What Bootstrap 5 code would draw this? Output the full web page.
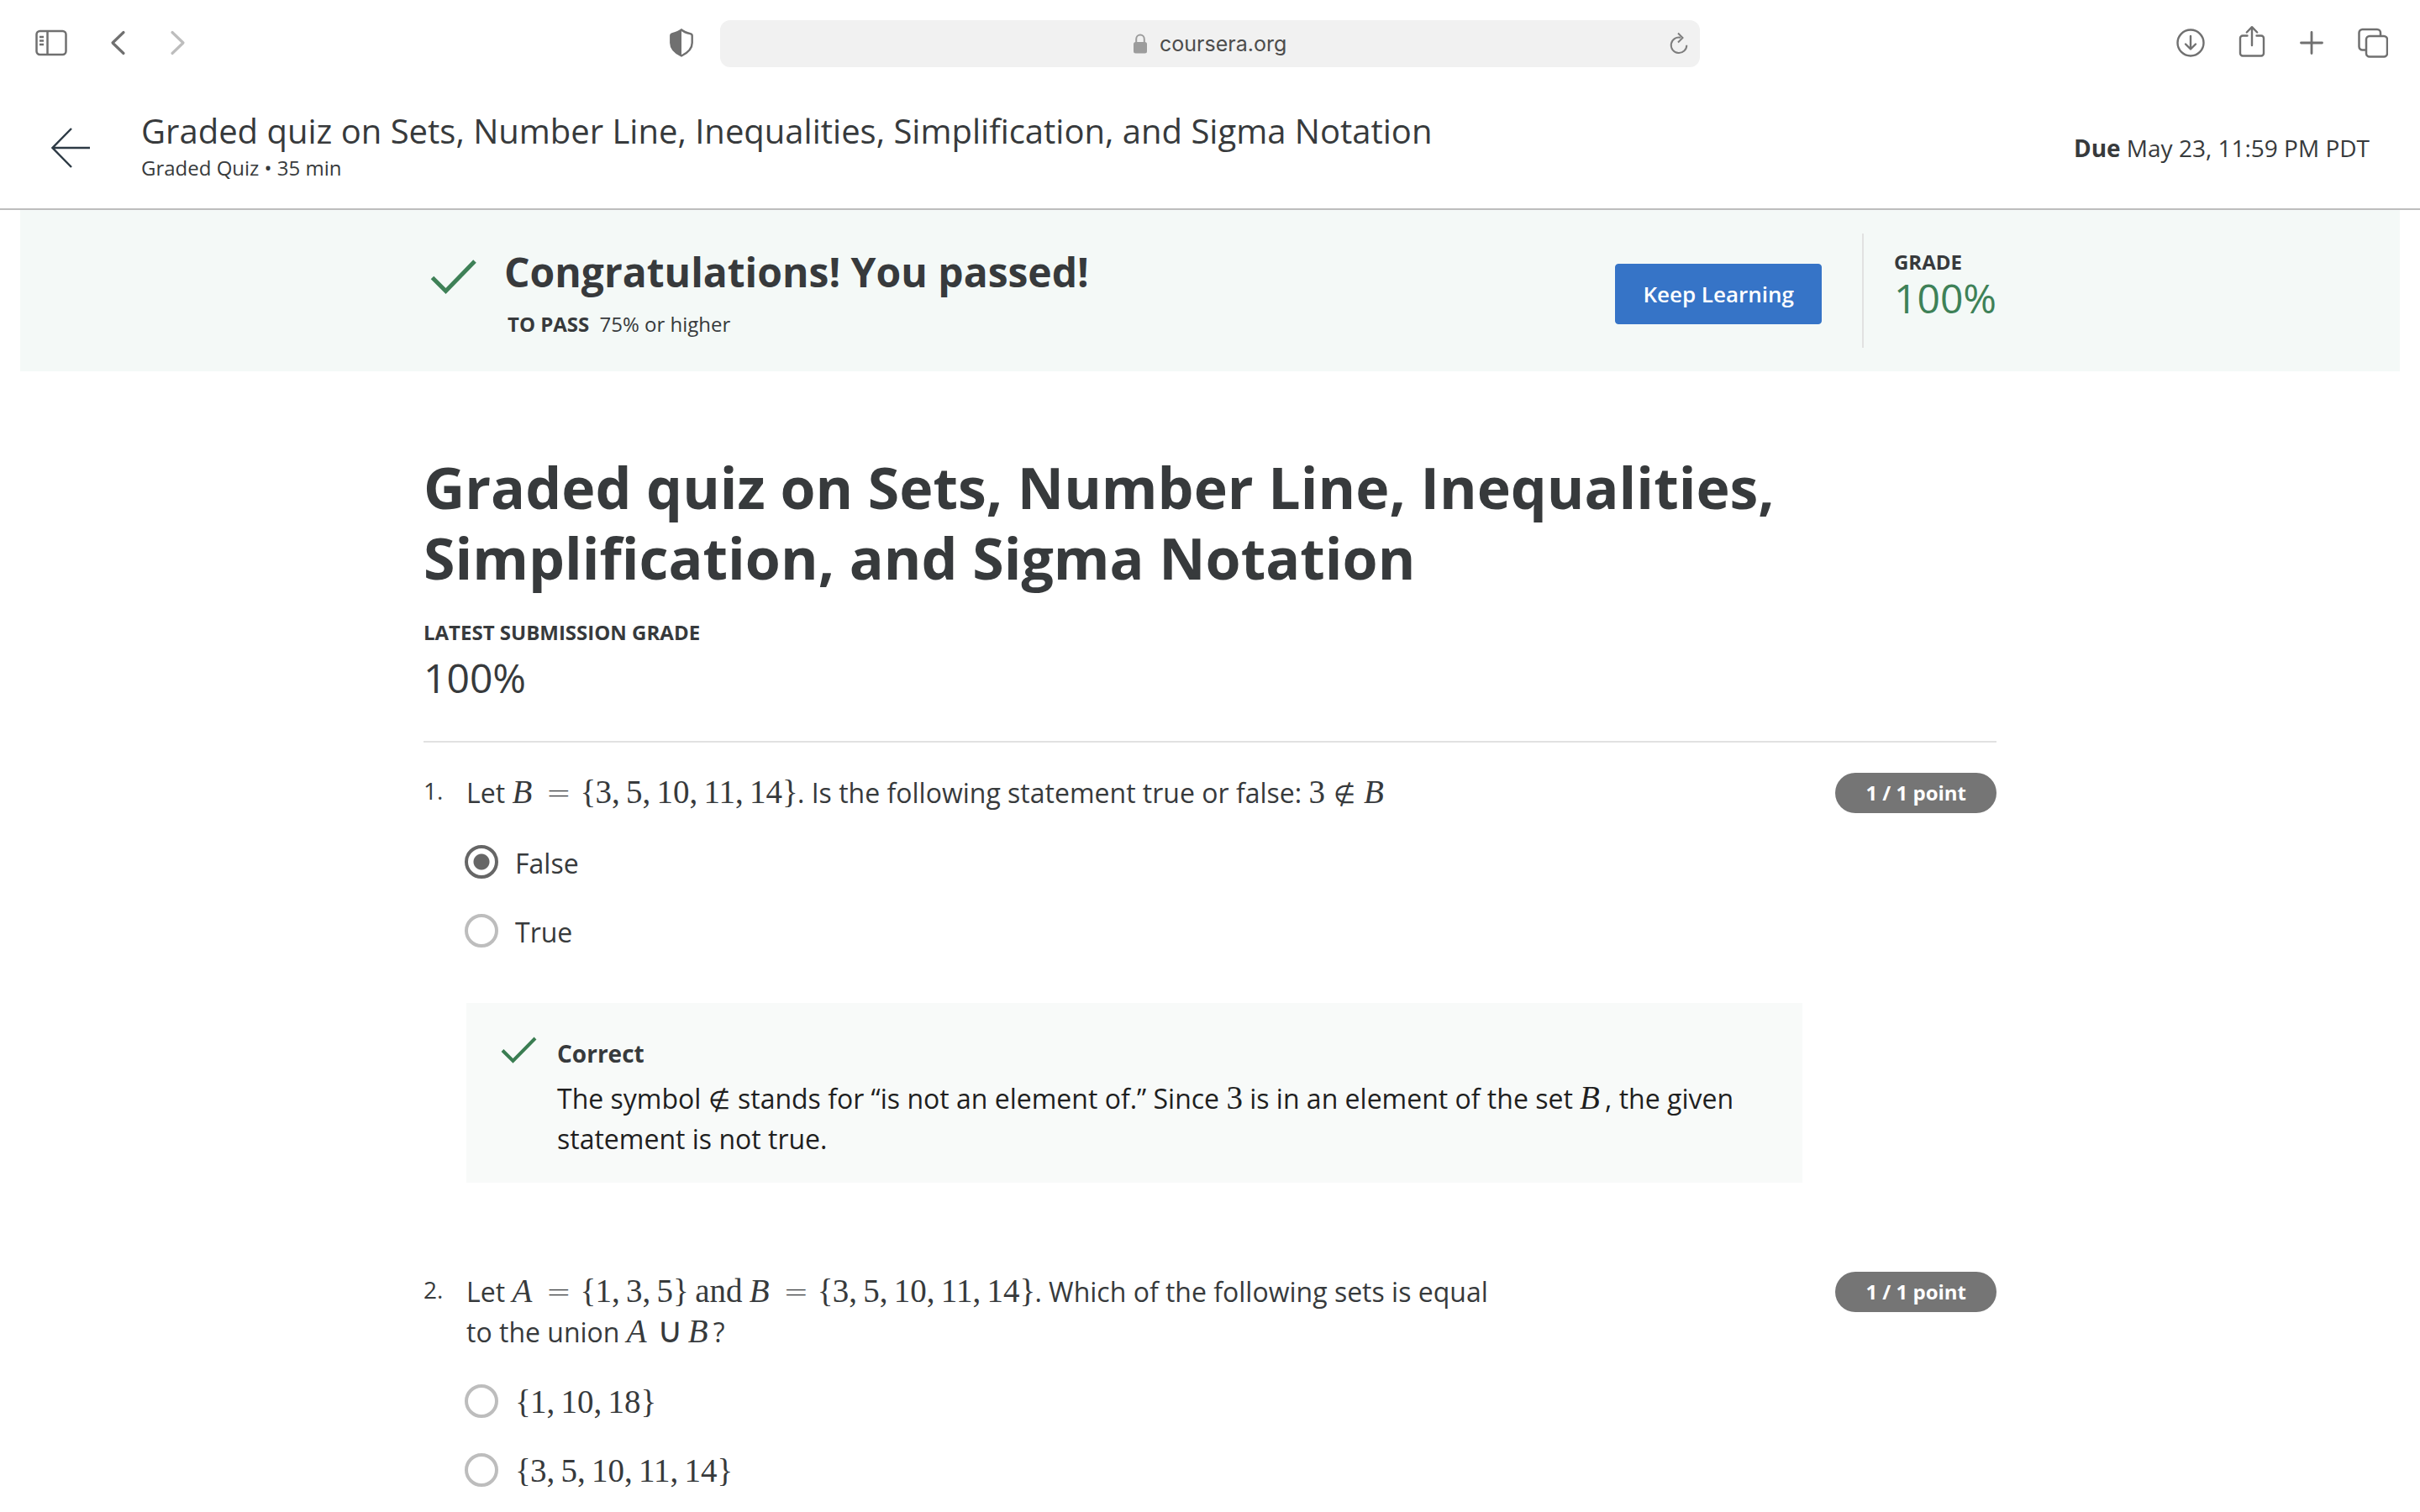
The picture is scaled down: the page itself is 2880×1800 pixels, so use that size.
<!DOCTYPE html>
<html lang="en">
<head>
<meta charset="utf-8">
<meta name="viewport" content="width=device-width, initial-scale=1">
<title>Graded quiz | Coursera</title>
<link rel="stylesheet" href="https://cdn.jsdelivr.net/npm/bootstrap@5.3.0/dist/css/bootstrap.min.css">
<style>
  :root { --ink: #373a3c; --pass: #3e8157; --rule: #e1e1e1; }
  body { font-family: "Open Sans", sans-serif; font-size: 32px; line-height: 48px; color: var(--ink); background: #fff; }
  svg { display: block; flex: none; }

  /* Browser toolbar */
  .toolbar { height: 104px; padding: 0 38px 2px; }
  .toolbar-side { flex: 1 1 0; }
  .icon-btn { padding: 0; border: 0; background: none; color: #707070; line-height: 1; }
  .nav-arrow { margin-left: 51px; }
  .nav-arrow:disabled { color: #bdbdbd; }
  .shield { margin-right: 32px; }
  .icon-gap { gap: 40px; }
  .share { margin-bottom: 4px; }
  .address { flex: 0 0 auto; width: 1166px; max-width: 60%; height: 56px; margin-top: 2px; padding: 0 14px; border-radius: 12px; background: #f1f1f1; }
  .address-text { width: 176px; height: 40px; padding: 0 0 0 6px; border: 0; background: none; color: #4c4c4c; font-family: Inter, sans-serif; font-size: 25px; line-height: 40px; }
  .lock { margin-left: 40px; }

  /* Item header */
  .item-header { height: 146px; padding: 0 60px; border-bottom: 2px solid #bdbdbd; }
  .item-heading { margin-left: 60px; padding-bottom: 8px; }
  .item-title { font-size: 40px; line-height: 56px; }
  .meta-text { font-size: 24px; line-height: 32px; }
  .due-text { font-size: 28px; line-height: 40px; }

  .quiz-width { width: 100%; max-width: 1872px; margin: 0 auto; }

  /* Result banner */
  .result-banner { height: 192px; margin: 0 24px; background: #f4f9f7; }
  .result-check { margin: 14px 32px 0 8px; }
  .result-title { font-size: 48px; line-height: 60px; font-weight: 700; }
  .pass-label { margin-right: 6px; }
  .btn-keep { --bs-btn-bg: #3674c7; --bs-btn-border-color: #3674c7; --bs-btn-color: #fff; --bs-btn-hover-bg: #2a5fa8; --bs-btn-hover-color: #fff; height: 72px; padding: 0 32px; border-radius: 4px; font-size: 26px; font-weight: 600; margin-top: 8px; }
  .grade-box { height: 136px; margin-left: 48px; padding: 0 0 14px 36px; border-left: 2px solid var(--rule); }
  .grade-value { font-size: 48px; line-height: 54px; color: var(--pass); }

  /* Quiz */
  .quiz-main { padding-top: 96px; }
  .quiz-title { margin-bottom: 31px; font-size: 68px; line-height: 84px; font-weight: 700; }
  .latest-value { margin-bottom: 45px; font-size: 48px; line-height: 60px; }
  .quiz-rule { border-top: 2px solid var(--rule); }
  .q-item { padding-top: 36px; }
  .q-item + .q-item { padding-top: 106px; }
  .q-num { width: 51px; font-size: 28px; line-height: 42px; }
  .q-text { max-width: 1240px; }
  .points { padding: 0 36px; border-radius: 24px; background: #757575; color: #fff; font-size: 24px; line-height: 48px; font-weight: 700; }
  .options { margin: 36px 0 0 49px; gap: 34px; }
  .option { gap: 20px; }
  .option .form-check-input { width: 40px; height: 40px; margin: 2px 0 0; border: 4px solid #bdbdbd; flex: none; }
  .option .form-check-input:checked { border-color: #666; background: #fff radial-gradient(circle, #666 9px, #fff 10px); }
  .feedback { margin: 60px 231px 0 51px; padding: 40px 40px 28px 41px; background: #f8faf9; gap: 23px; }
  .feedback-title { margin-bottom: 10px; font-size: 28px; line-height: 40px; font-weight: 700; }
  .feedback-text { color: #1f1f1f; }

  /* Inline formulas */
  .tex { font-family: "Liberation Serif", serif; font-size: 39px; line-height: 1; white-space: nowrap; }
  .tex i, .tex b, .tex s, .tex u { display: inline-block; line-height: 1; font-weight: 400; text-decoration: none; text-align: center; }
  .tex i { width: 30px; text-align: left; }
  .tex b { width: 17px; text-align: left; }
  .tex u { width: 18px; }
  .tex s { width: 51px; font-family: "DejaVu Sans Light", "DejaVu Sans", sans-serif; font-weight: 200; font-size: 36px; }
  .tex s.member { width: 46px; font-size: 30px; }
  .tex s.cup { width: 43px; font-size: 42px; }
  .tex s.lone { width: 27px; font-size: 30px; }
</style>
</head>
<body>

<nav class="toolbar d-flex align-items-center" aria-label="Browser">
  <div class="toolbar-side d-flex align-items-center">
    <button class="icon-btn ms-1" type="button" aria-label="Sidebar">
      <svg width="38" height="32" viewBox="0 0 38 32" fill="none" stroke="currentColor" stroke-width="2.5"><rect x="1.5" y="2" width="35" height="28" rx="4"/><path d="M14.5 2v28M5 9h5M5 13.5h5M5 18h5"/></svg>
    </button>
    <button class="icon-btn nav-arrow" type="button" aria-label="Back">
      <svg width="20" height="30" viewBox="0 0 20 30" fill="none" stroke="currentColor" stroke-width="3.2" stroke-linecap="round" stroke-linejoin="round"><path d="M16 2.5 3 15l13 12.5"/></svg>
    </button>
    <button class="icon-btn nav-arrow" type="button" aria-label="Forward" disabled>
      <svg width="20" height="30" viewBox="0 0 20 30" fill="none" stroke="currentColor" stroke-width="3.2" stroke-linecap="round" stroke-linejoin="round"><path d="M3 2.5 16 15 3 27.5"/></svg>
    </button>
    <button class="icon-btn shield ms-auto" type="button" aria-label="Privacy report">
      <svg width="28" height="34" viewBox="0 0 28 34"><path d="M14 1.5C10.5 4.500 6.500 5.500 3.500 6.200 2 6.600 1.300 7.200 1.300 8.600V17c0 8 6.500 12.500 12.700 15.500C20.200 29.500 26.700 25 26.700 17V8.600c0-1.400-.7-2-2.200-2.400C21.500 5.500 17.500 4.500 14 1.500z" fill="none" stroke="currentColor" stroke-width="2.4"/><path d="M14 1.500C10.500 4.500 6.500 5.500 3.500 6.200 2 6.600 1.300 7.200 1.300 8.600V17c0 8 6.500 12.500 12.700 15.500z" fill="currentColor"/></svg>
    </button>
  </div>
  <div class="address d-flex align-items-center">
    <div class="flex-fill d-flex justify-content-center align-items-center gap-2">
      <svg class="lock" width="18" height="24" viewBox="0 0 18 24"><rect x="1" y="10" width="16" height="13.5" rx="2.5" fill="#9c9c9c"/><path d="M4.200 11V6.500a4.800 5 0 0 1 9.600 0V11" fill="none" stroke="#9c9c9c" stroke-width="2"/></svg>
      <input class="address-text" type="text" value="coursera.org" aria-label="Address">
    </div>
    <button class="icon-btn" type="button" aria-label="Reload">
      <svg width="22" height="28" viewBox="0 0 22 28" fill="none" stroke="#7d7d7d" stroke-width="2"><path d="M13 6.700A9.300 9.300 0 1 0 20.300 15.800"/><path d="M10 1.500 15.500 7 10 12.500"/></svg>
    </button>
  </div>
  <div class="toolbar-side icon-gap d-flex align-items-center justify-content-end">
    <button class="icon-btn" type="button" aria-label="Downloads">
      <svg width="34" height="34" viewBox="0 0 34 34" fill="none" stroke="currentColor" stroke-width="2.4" stroke-linecap="round" stroke-linejoin="round"><circle cx="17" cy="17" r="15.5"/><path d="M17 9v15M11 18.500l6 6 6-6"/></svg>
    </button>
    <button class="icon-btn share" type="button" aria-label="Share">
      <svg width="32" height="38" viewBox="0 0 32 38" fill="none" stroke="currentColor" stroke-width="2.4" stroke-linecap="round" stroke-linejoin="round"><path d="M10.500 12.500H5A3 3 0 0 0 2 15.500V33.500a3 3 0 0 0 3 3H27a3 3 0 0 0 3-3V15.500a3 3 0 0 0-3-3H21.500M16 24V2.500M9.800 8.500 16 2.200l6.200 6.300"/></svg>
    </button>
    <button class="icon-btn" type="button" aria-label="New tab">
      <svg width="30" height="28" viewBox="0 0 30 28" fill="none" stroke="currentColor" stroke-width="2.8" stroke-linecap="round"><path d="M15 1.500v25M2.500 14h25"/></svg>
    </button>
    <button class="icon-btn" type="button" aria-label="Tab overview">
      <svg width="36" height="36" viewBox="0 0 36 36" fill="none" stroke="currentColor" stroke-width="2.5"><rect x="10" y="10" width="25" height="24.5" rx="4"/><path d="M10 26.500H5.500a4 4 0 0 1-4-4V6a4 4 0 0 1 4-4H23a4 4 0 0 1 4 4v4"/></svg>
    </button>
  </div>
</nav>

<header class="item-header d-flex align-items-center">
  <a href="#" aria-label="Back to course">
    <svg width="48" height="48" viewBox="0 0 48 48" fill="none" stroke="#2d3a45" stroke-width="2.5"><path d="M47 24H3M25 1 2.500 24 25 47"/></svg>
  </a>
  <div class="item-heading">
    <div class="item-title">Graded quiz on Sets, Number Line, Inequalities, Simplification, and Sigma Notation</div>
    <div class="meta-text">Graded Quiz • 35 min</div>
  </div>
  <div class="due-text ms-auto"><strong>Due</strong> May 23, 11:59 PM PDT</div>
</header>

<section class="result-banner d-flex align-items-center">
  <div class="quiz-width d-flex align-items-center">
    <div class="d-flex flex-fill pt-1">
      <svg class="result-check" width="56" height="44" viewBox="0 0 56 44" fill="none" stroke="#3e8157" stroke-width="5"><path d="M2.500 22.500 18.500 38.500 53 3"/></svg>
      <div>
        <h2 class="result-title mb-3">Congratulations! You passed!</h2>
        <div class="meta-text ms-1"><strong class="pass-label">TO PASS</strong> <span>75% or higher</span></div>
      </div>
    </div>
    <button class="btn btn-keep" type="button">Keep Learning</button>
    <div class="grade-box d-flex flex-column justify-content-center">
      <strong class="meta-text">GRADE</strong>
      <span class="grade-value">100%</span>
    </div>
  </div>
</section>

<main class="quiz-width quiz-main">
  <h1 class="quiz-title">Graded quiz on Sets, Number Line, Inequalities, Simplification, and Sigma Notation</h1>
  <div class="meta-text fw-bold mb-2">LATEST SUBMISSION GRADE</div>
  <div class="latest-value">100%</div>

  <div class="quiz-rule">
    <section class="q-item">
      <div class="d-flex align-items-start">
        <div class="q-num">1.</div>
        <div class="q-text" id="q1">Let <span class="tex"><i>B</i><s>=</s><u>{</u>3<b>,</b>5<b>,</b>10<b>,</b>11<b>,</b>14<u>}</u></span>. Is the following statement true or false: <span class="tex">3<s class="member">∉</s><i>B</i></span></div>
        <div class="points ms-auto">1 / 1 point</div>
      </div>
      <div class="options d-flex flex-column" role="radiogroup" aria-labelledby="q1">
        <div class="option d-flex"><input class="form-check-input" type="radio" name="q1" id="q1a" checked><label for="q1a">False</label></div>
        <div class="option d-flex"><input class="form-check-input" type="radio" name="q1" id="q1b"><label for="q1b">True</label></div>
      </div>
      <div class="feedback d-flex">
        <svg width="44" height="34" viewBox="0 0 44 34" fill="none" stroke="#3a7d52" stroke-width="4"><path d="M2 16.500 14.500 29 41 2"/></svg>
        <div>
          <div class="feedback-title">Correct</div>
          <div class="feedback-text">The symbol <span class="tex"><s class="lone">∉</s></span> stands for “is not an element of.” Since <span class="tex">3</span> is in an element of the set <span class="tex"><i>B</i></span>, the given statement is not true.</div>
        </div>
      </div>
    </section>

    <section class="q-item">
      <div class="d-flex align-items-start">
        <div class="q-num">2.</div>
        <div class="q-text" id="q2">Let <span class="tex"><i>A</i><s>=</s><u>{</u>1<b>,</b>3<b>,</b>5<u>}</u></span> <span class="tex">and</span> <span class="tex"><i>B</i><s>=</s><u>{</u>3<b>,</b>5<b>,</b>10<b>,</b>11<b>,</b>14<u>}</u></span>. Which of the following sets is equal to the union <span class="tex"><i>A</i><s class="cup">∪</s><i>B</i></span>?</div>
        <div class="points ms-auto">1 / 1 point</div>
      </div>
      <div class="options d-flex flex-column" role="radiogroup" aria-labelledby="q2">
        <div class="option d-flex"><input class="form-check-input" type="radio" name="q2" id="q2a"><label for="q2a"><span class="tex"><u>{</u>1<b>,</b>10<b>,</b>18<u>}</u></span></label></div>
        <div class="option d-flex"><input class="form-check-input" type="radio" name="q2" id="q2b"><label for="q2b"><span class="tex"><u>{</u>3<b>,</b>5<b>,</b>10<b>,</b>11<b>,</b>14<u>}</u></span></label></div>
      </div>
    </section>
  </div>
</main>

<script src="https://cdn.jsdelivr.net/npm/bootstrap@5.3.0/dist/js/bootstrap.bundle.min.js"></script>
</body>
</html>
